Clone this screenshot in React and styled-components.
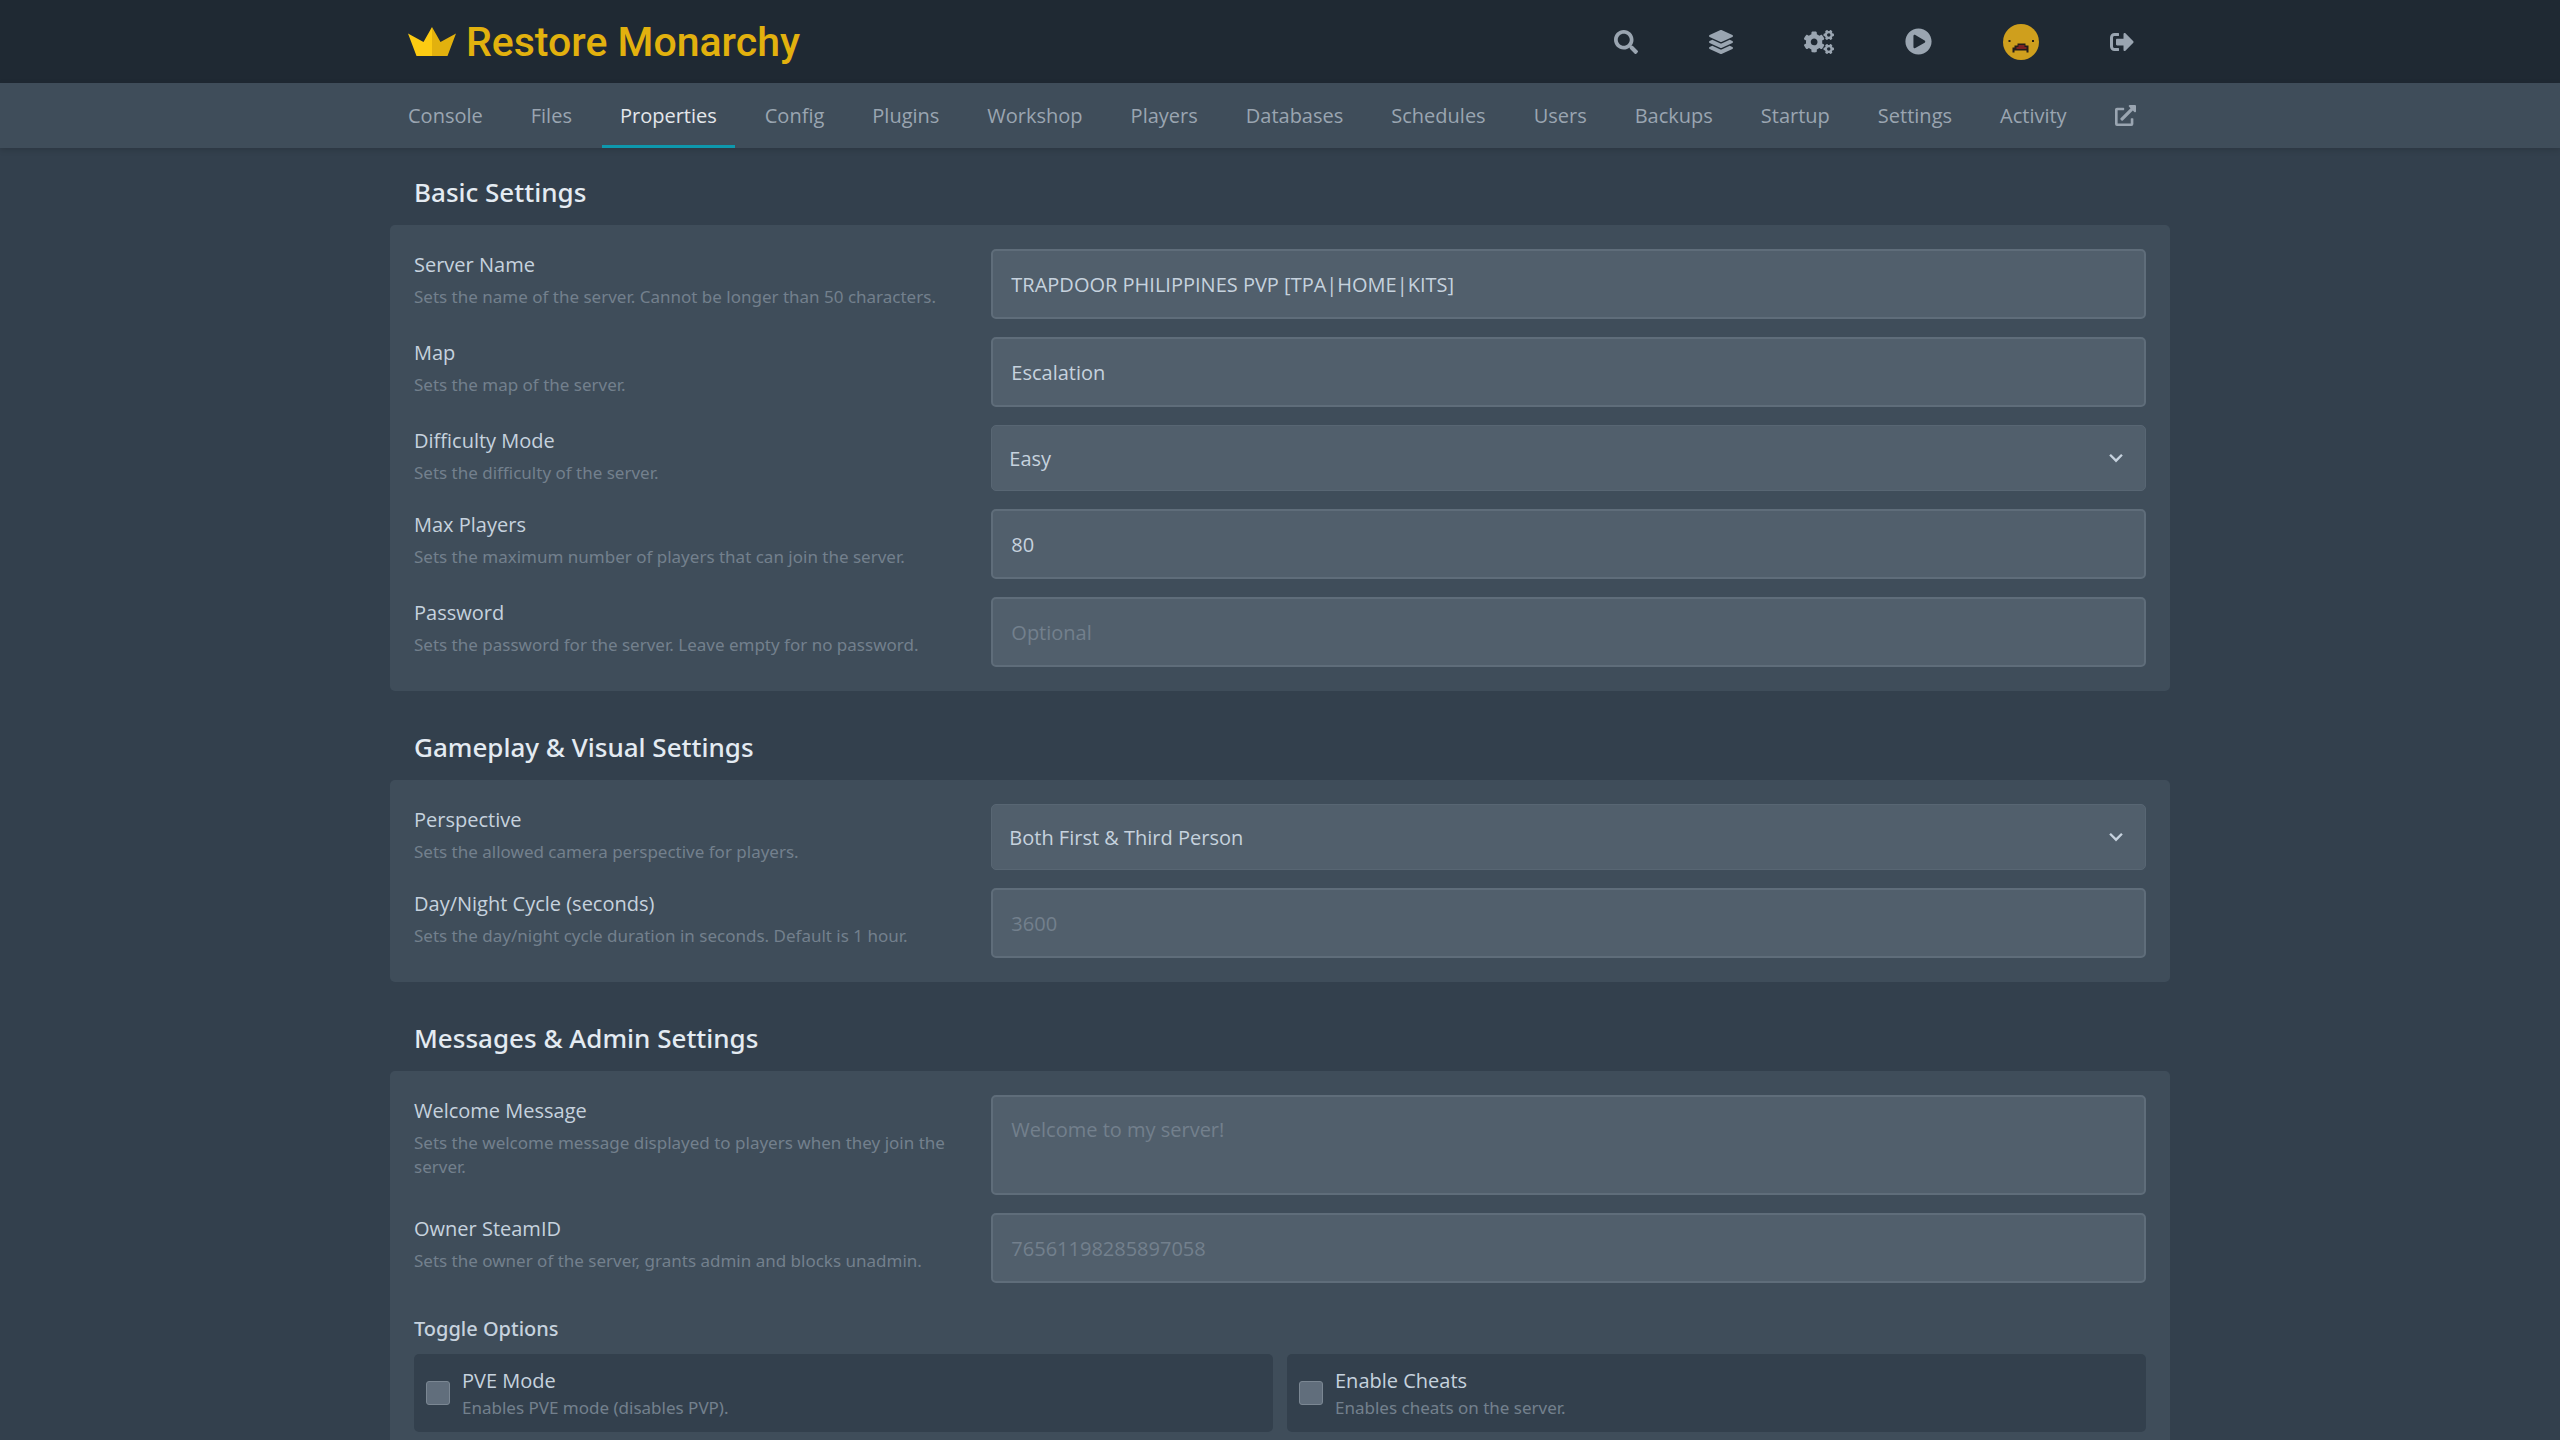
import React from "react";
import styled, { createGlobalStyle } from "styled-components";
import {
  FaCogs,
  FaExternalLinkAlt,
  FaLayerGroup,
  FaPlayCircle,
  FaSearch,
  FaSignOutAlt,
} from "react-icons/fa";

const tabs = [
  "Console",
  "Files",
  "Properties",
  "Config",
  "Plugins",
  "Workshop",
  "Players",
  "Databases",
  "Schedules",
  "Users",
  "Backups",
  "Startup",
  "Settings",
  "Activity",
];

const sections = [
  {
    title: "Basic Settings",
    fields: [
      {
        id: "server-name",
        label: "Server Name",
        help: "Sets the name of the server. Cannot be longer than 50 characters.",
        value: "TRAPDOOR PHILIPPINES PVP [TPA|HOME|KITS]",
      },
      { id: "map", label: "Map", help: "Sets the map of the server.", value: "Escalation" },
      {
        id: "difficulty",
        label: "Difficulty Mode",
        help: "Sets the difficulty of the server.",
        options: ["Easy", "Normal", "Hard"],
      },
      {
        id: "max-players",
        label: "Max Players",
        help: "Sets the maximum number of players that can join the server.",
        value: "80",
      },
      {
        id: "password",
        label: "Password",
        help: "Sets the password for the server. Leave empty for no password.",
        placeholder: "Optional",
      },
    ],
  },
  {
    title: "Gameplay & Visual Settings",
    fields: [
      {
        id: "perspective",
        label: "Perspective",
        help: "Sets the allowed camera perspective for players.",
        options: ["Both First & Third Person", "First Person", "Third Person"],
      },
      {
        id: "cycle",
        label: "Day/Night Cycle (seconds)",
        help: "Sets the day/night cycle duration in seconds. Default is 1 hour.",
        placeholder: "3600",
      },
    ],
  },
  {
    title: "Messages & Admin Settings",
    fields: [
      {
        id: "welcome",
        label: "Welcome Message",
        help: "Sets the welcome message displayed to players when they join the server.",
        placeholder: "Welcome to my server!",
        multiline: true,
      },
      {
        id: "owner",
        label: "Owner SteamID",
        help: "Sets the owner of the server, grants admin and blocks unadmin.",
        placeholder: "76561198285897058",
      },
    ],
    toggles: [
      { id: "pve", label: "PVE Mode", help: "Enables PVE mode (disables PVP)." },
      { id: "cheats", label: "Enable Cheats", help: "Enables cheats on the server." },
    ],
  },
];

function Crown() {
  return (
    <svg width="48" height="29" viewBox="0 0 48 29" aria-hidden="true">
      <path d="M0 6.500 L15.500 15 L24 0 V29 H8.500 Z" fill="#fccb12" />
      <path d="M48 6.500 L32.500 15 L24 0 V29 H39.500 Z" fill="#e2b10e" />
    </svg>
  );
}

function Avatar() {
  return (
    <svg width="36" height="36" viewBox="0 0 36 36" aria-hidden="true">
      <circle cx="18" cy="18" r="18" fill="#cf9f1d" />
      <path d="M5.500 16h2v2h-2zM29 16h2v2h-2z" fill="#2d2413" />
      <path d="M9.500 28.500v-5h2v-2h3v-2h8v2h3v7h-2v-2h-12v2z" fill="#241d1a" />
      <path d="M13.500 25v-2h2v-2h6v2h2v2z" fill="#7c2222" />
    </svg>
  );
}

function Chevron() {
  return (
    <ChevronIcon viewBox="0 0 20 20" aria-hidden="true">
      <path
        d="M9.293 12.950l.707.707L15.657 8l-1.414-1.414L10 10.828 5.757 6.586 4.343 8z"
        fill="#c6d2de"
      />
    </ChevronIcon>
  );
}

function Control({ field }) {
  if (field.options) {
    return (
      <SelectWrap>
        <Select id={field.id}>
          {field.options.map((option) => (
            <option key={option}>{option}</option>
          ))}
        </Select>
        <Chevron />
      </SelectWrap>
    );
  }
  if (field.multiline) {
    return <TextArea id={field.id} placeholder={field.placeholder} />;
  }
  return (
    <Input id={field.id} defaultValue={field.value} placeholder={field.placeholder} />
  );
}

function Section({ section }) {
  return (
    <section>
      <SectionTitle>{section.title}</SectionTitle>
      <Card>
        {section.fields.map((field) => (
          <Row key={field.id}>
            <RowText>
              <Label htmlFor={field.id}>{field.label}</Label>
              <Help>{field.help}</Help>
            </RowText>
            <Control field={field} />
          </Row>
        ))}
        {section.toggles && (
          <div>
            <ToggleTitle>Toggle Options</ToggleTitle>
            <ToggleGrid>
              {section.toggles.map((toggle) => (
                <Toggle key={toggle.id}>
                  <Checkbox type="checkbox" id={toggle.id} />
                  <div>
                    <ToggleLabel htmlFor={toggle.id}>{toggle.label}</ToggleLabel>
                    <ToggleHelp>{toggle.help}</ToggleHelp>
                  </div>
                </Toggle>
              ))}
            </ToggleGrid>
          </div>
        )}
      </Card>
    </section>
  );
}

function App() {
  return (
    <Page>
      <GlobalStyle />
      <Header>
        <HeaderInner>
          <Brand href="#">
            <Crown />
            Restore Monarchy
          </Brand>
          <Actions>
            <Action aria-label="Search">
              <FaSearch size={24} />
            </Action>
            <Action aria-label="Servers">
              <FaLayerGroup size={24} />
            </Action>
            <Action aria-label="Admin">
              <FaCogs size={30} />
            </Action>
            <Action aria-label="Tutorials">
              <FaPlayCircle size={27} />
            </Action>
            <Action aria-label="Account">
              <Avatar />
            </Action>
            <Action aria-label="Sign out">
              <FaSignOutAlt size={24} />
            </Action>
          </Actions>
        </HeaderInner>
      </Header>
      <SubNav>
        <Tabs>
          {tabs.map((tab) => (
            <Tab key={tab} href="#" $active={tab === "Properties"}>
              {tab}
            </Tab>
          ))}
          <Tab href="#" aria-label="Open in admin">
            <FaExternalLinkAlt size={21} />
          </Tab>
        </Tabs>
      </SubNav>
      <Content>
        {sections.map((section) => (
          <Section key={section.title} section={section} />
        ))}
      </Content>
    </Page>
  );
}

const GlobalStyle = createGlobalStyle`
  * {
    box-sizing: border-box;
  }

  body {
    margin: 0;
    background: #33404d;
    color: #c6d2de;
    font-family: "Open Sans", "Noto Sans", sans-serif;
    font-size: 20px;
  }
`;

const Page = styled.div`
  height: 100vh;
  overflow: hidden;
`;

const Header = styled.header`
  background: #1f2933;
`;

const HeaderInner = styled.div`
  display: flex;
  justify-content: space-between;
  align-items: center;
  max-width: 1780px;
  height: 83px;
  margin: 0 auto;
`;

const Brand = styled.a`
  display: flex;
  align-items: center;
  gap: 10px;
  padding-left: 18px;
  color: #e2b10e;
  font-family: Roboto, sans-serif;
  font-size: 41px;
  font-weight: 500;
  text-decoration: none;
`;

const Actions = styled.div`
  display: flex;
  height: 100%;
`;

const Action = styled.button`
  display: flex;
  align-items: center;
  padding: 0 36px 0 35px;
  border: 0;
  background: none;
  color: #9aa5b1;
`;

const SubNav = styled.nav`
  background: #3f4d5a;
  box-shadow: 0 2px 6px rgba(0, 0, 0, 0.15);
`;

const Tabs = styled.div`
  display: flex;
  gap: 12px;
  max-width: 1780px;
  height: 65px;
  margin: 0 auto;
`;

const Tab = styled.a`
  display: flex;
  align-items: center;
  padding: 0 18px;
  color: ${(props) => (props.$active ? "#e4e7eb" : "#9aa5b1")};
  box-shadow: ${(props) => (props.$active ? "inset 0 -3px #0e98ad" : "none")};
  text-decoration: none;
`;

const Content = styled.main`
  display: flex;
  flex-direction: column;
  gap: 24px;
  max-width: 1780px;
  margin: 0 auto;
  padding-top: 12px;
`;

const SectionTitle = styled.h2`
  margin: 0;
  padding: 15px 24px;
  color: #e4ebf2;
  font-family: "Noto Sans", sans-serif;
  font-size: 26px;
  font-weight: 500;
  line-height: 35px;
`;

const Card = styled.div`
  display: flex;
  flex-direction: column;
  gap: 18px;
  padding: 24px;
  border-radius: 5px;
  background: #3f4d5a;
`;

const Row = styled.div`
  display: grid;
  grid-template-columns: 1fr 2fr;
`;

const RowText = styled.div`
  padding-right: 24px;
`;

const Label = styled.label`
  display: block;
  color: #c6d2de;
  line-height: 32px;
`;

const Help = styled.p`
  margin: 4px 0 0;
  color: #73808d;
  font-family: "Noto Sans", sans-serif;
  font-size: 17px;
  line-height: 24px;
`;

const Input = styled.input`
  width: 100%;
  height: 70px;
  padding: 0 18px;
  border: 2px solid #5f6d7a;
  border-radius: 5px;
  background: #515f6c;
  color: #c6d2de;
  font: inherit;

  &::placeholder {
    color: #73808d;
  }
`;

const TextArea = styled.textarea`
  display: block;
  width: 100%;
  height: 100px;
  padding: 18px;
  border: 2px solid #5f6d7a;
  border-radius: 5px;
  background: #515f6c;
  color: #c6d2de;
  font: inherit;
  line-height: 30px;
  resize: none;

  &::placeholder {
    color: #73808d;
  }
`;

const SelectWrap = styled.div`
  display: grid;
  align-items: center;
`;

const Select = styled.select`
  grid-area: 1 / 1;
  width: 100%;
  height: 66px;
  padding: 0 17px;
  border: 1px solid #586673;
  border-radius: 5px;
  background: #515f6c;
  color: #c6d2de;
  font: inherit;
  appearance: none;
`;

const ChevronIcon = styled.svg`
  grid-area: 1 / 1;
  justify-self: end;
  width: 24px;
  height: 24px;
  margin-right: 18px;
  pointer-events: none;
`;

const ToggleTitle = styled.h3`
  margin: 12px 0 9px;
  color: #c6d2de;
  font-family: "Noto Sans", sans-serif;
  font-size: 20px;
  font-weight: 500;
  line-height: 32px;
`;

const ToggleGrid = styled.div`
  display: grid;
  grid-template-columns: 1fr 1fr;
  gap: 14px;
`;

const Toggle = styled.div`
  display: flex;
  align-items: center;
  gap: 12px;
  height: 78px;
  padding: 0 12px;
  border-radius: 5px;
  background: #33404d;
`;

const Checkbox = styled.input`
  width: 24px;
  height: 24px;
  margin: 0;
  border: 1px solid #7b8793;
  border-radius: 3px;
  background: #616e7c;
  appearance: none;
`;

const ToggleLabel = styled.label`
  display: block;
  color: #c6d2de;
  line-height: 30px;
`;

const ToggleHelp = styled.p`
  margin: 0;
  color: #73808d;
  font-family: "Noto Sans", sans-serif;
  font-size: 17px;
  line-height: 24px;
`;

export default App;
